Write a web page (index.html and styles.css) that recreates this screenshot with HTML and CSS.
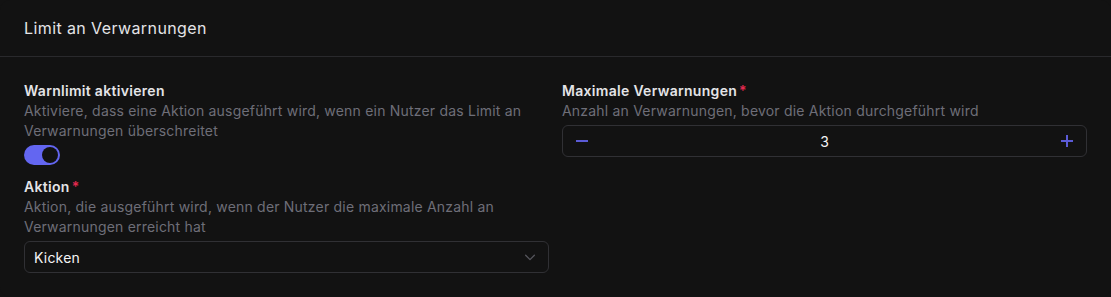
FILE: index.html
```html
<!DOCTYPE html>
<html lang="de">
<head>
<meta charset="utf-8">
<link rel="stylesheet" href="styles.css">
</head>
<body>
<section class="card">
  <header class="card-header">Limit an Verwarnungen</header>
  <div class="card-body">
    <div class="col">
      <div class="field">
        <div class="label">Warnlimit aktivieren</div>
        <div class="desc">Aktiviere, dass eine Aktion ausgeführt wird, wenn ein Nutzer das Limit an Verwarnungen überschreitet</div>
        <div class="toggle"><span class="knob"></span></div>
      </div>
      <div class="field">
        <div class="label">Aktion<span class="req">*</span></div>
        <div class="desc">Aktion, die ausgeführt wird, wenn der Nutzer die maximale Anzahl an Verwarnungen erreicht hat</div>
        <div class="select">
          <span>Kicken</span>
          <svg width="14" height="14" viewBox="0 0 16 16" fill="none" stroke="#55555c" stroke-width="1.5" stroke-linecap="round" stroke-linejoin="round"><path d="M3 6l5 5 5-5"/></svg>
        </div>
      </div>
    </div>
    <div class="col">
      <div class="field">
        <div class="label">Maximale Verwarnungen<span class="req">*</span></div>
        <div class="desc">Anzahl an Verwarnungen, bevor die Aktion durchgeführt wird</div>
        <div class="number">
          <svg width="16" height="16" viewBox="0 0 16 16" fill="none" stroke="#5b5bd6" stroke-width="2"><path d="M2 8h12"/></svg>
          <span class="value">3</span>
          <svg width="16" height="16" viewBox="0 0 16 16" fill="none" stroke="#5b5bd6" stroke-width="2"><path d="M2 8h12M8 2v12"/></svg>
        </div>
      </div>
    </div>
  </div>
</section>
</body>
</html>
```
FILE: styles.css
```css
html, body {
  margin: 0;
  background: #121212;
}
body {
  font-family: Inter, "Noto Sans", sans-serif;
  color: #e4e4e7;
}
.card {
  box-sizing: border-box;
  width: 1111px;
  height: 297px;
  background: #121212;
  border-radius: 10px;
}
.card-header {
  height: 57px;
  box-sizing: border-box;
  padding: 0 24px;
  display: flex;
  align-items: center;
  font-size: 16px;
  letter-spacing: 0.4px;
  color: #e4e4e7;
  border-bottom: 1px solid #29292c;
}
.card-body {
  display: grid;
  grid-template-columns: 1fr 1fr;
  column-gap: 13px;
  padding: 24px 24px 24px;
}
.col {
  display: flex;
  flex-direction: column;
  gap: 12px;
}
.field {
  display: flex;
  flex-direction: column;
}
.label {
  font-size: 14px;
  line-height: 20px;
  font-weight: 600;
  letter-spacing: 0.3px;
  color: #e4e4e7;
}
.req {
  color: #e5294f;
  margin-left: 2px;
}
.desc {
  font-size: 14px;
  line-height: 20px;
  letter-spacing: 0.2px;
  color: #6e6e78;
}
.toggle {
  margin-top: 4px;
  width: 36px;
  height: 20px;
  border-radius: 10px;
  background: #6366f1;
  display: flex;
  align-items: center;
  justify-content: flex-end;
  padding: 0 2px;
  box-sizing: border-box;
}
.knob {
  width: 16px;
  height: 16px;
  border-radius: 50%;
  background: #121212;
}
.select {
  margin-top: 4px;
  height: 32px;
  box-sizing: border-box;
  border: 1px solid #303034;
  border-radius: 6px;
  display: flex;
  align-items: center;
  justify-content: space-between;
  padding: 0 11px 0 9px;
  font-size: 14px;
  letter-spacing: 0.2px;
  color: #f4f4f5;
}
.number {
  margin-top: 4px;
  height: 32px;
  box-sizing: border-box;
  border: 1px solid #303034;
  border-radius: 6px;
  display: flex;
  align-items: center;
  justify-content: space-between;
  padding: 0 11px;
  font-size: 14px;
  color: #f4f4f5;
}
.value {
  flex: 1;
  text-align: center;
}
```
